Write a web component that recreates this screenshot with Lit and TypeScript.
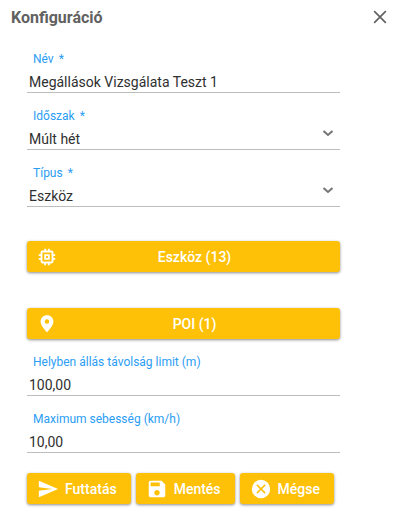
import { LitElement, html, css, svg } from "lit";
import { customElement, property, state } from "lit/decorators.js";

const icons = {
  close: svg`<path d="M5 5 19 19M19 5 5 19" fill="none" stroke="currentColor" stroke-width="2"/>`,
  chevron: svg`<path d="M3 8l9 8 9-8" fill="none" stroke="currentColor" stroke-width="4"/>`,
  memory: svg`<path d="M15 9H9v6h6V9zm-2 4h-2v-2h2v2zm8-2V9h-2V7c0-1.100-.9-2-2-2h-2V3h-2v2h-2V3H9v2H7c-1.100 0-2 .9-2 2v2H3v2h2v2H3v2h2v2c0 1.100.9 2 2 2h2v2h2v-2h2v2h2v-2h2c1.100 0 2-.9 2-2v-2h2v-2h-2v-2h2zm-4 6H7V7h10v10z"/>`,
  place: svg`<path d="M12 2.500C8.100 2.500 5 5.500 5 9.300c0 5.100 7 11.700 7 11.700s7-6.600 7-11.700c0-3.800-3.100-6.800-7-6.800zm0 9.200a2.500 2.500 0 1 1 0-5 2.500 2.500 0 0 1 0 5z"/>`,
  send: svg`<path d="M2.010 21 23 12 2.010 3 2 10l15 2-15 2z"/>`,
  save: svg`<path d="M17 3H5a2 2 0 0 0-2 2v14c0 1.100.9 2 2 2h14c1.100 0 2-.9 2-2V7l-4-4zm-5 16c-1.660 0-3-1.340-3-3s1.340-3 3-3 3 1.340 3 3-1.340 3-3 3zm3-10H5V5h10v4z"/>`,
  cancel: svg`<circle cx="12" cy="12" r="10"/><path d="M7.500 7.500l9 9M16.500 7.500l-9 9" stroke="#ffc107" stroke-width="1.600"/>`,
};

type IconName = keyof typeof icons;

const icon = (name: IconName) =>
  html`<svg class="icon ${name}" viewBox="0 0 24 24" aria-hidden="true">${icons[name]}</svg>`;

@customElement("form-field")
export class FormField extends LitElement {
  @property() label = "";
  @property() value = "";
  @property({ type: Boolean }) required = false;
  @property({ type: Array }) options: string[] = [];

  static styles = css`
    :host {
      display: block;
    }
    .label {
      display: block;
      padding-left: 6px;
      font-size: 12px;
      line-height: 16px;
      color: #2a9df4;
    }
    .star {
      padding-left: 5px;
    }
    .box {
      display: flex;
      align-items: center;
      border-bottom: 1px solid #bdbdbd;
      color: #757575;
    }
    .control {
      flex: 1;
      min-width: 0;
      box-sizing: border-box;
      height: 25px;
      margin: 0;
      padding: 5px 2px 0;
      border: 0;
      outline: 0;
      appearance: none;
      background: transparent;
      color: #303030;
      font: 14px/20px Roboto, sans-serif;
    }
    .chevron {
      width: 12px;
      height: 12px;
      margin: 0 6px 8px -18px;
      pointer-events: none;
    }
  `;

  render() {
    return html`
      <label class="label" for="control"
        >${this.label}${this.required ? html`<span class="star">*</span>` : null}</label
      >
      <div class="box">
        ${this.options.length
          ? html`<select class="control" id="control" ?required=${this.required}>
                ${this.options.map((o) => html`<option ?selected=${o === this.value}>${o}</option>`)}
              </select>
              ${icon("chevron")}`
          : html`<input
              class="control"
              id="control"
              type="text"
              .value=${this.value}
              ?required=${this.required}
            />`}
      </div>
    `;
  }
}

@customElement("app-root")
export class AppRoot extends LitElement {
  @state() private devices = 13;
  @state() private pois = 1;

  static styles = css`
    :host {
      display: block;
      min-height: 100vh;
      background: #fff;
      font-family: Roboto, sans-serif;
    }
    .header {
      display: flex;
      align-items: flex-start;
      justify-content: space-between;
      padding: 7px 10px 0 11px;
    }
    .title {
      margin: 0;
      font-size: 16px;
      line-height: 22px;
      font-weight: 700;
      color: #616161;
    }
    .dismiss {
      display: flex;
      padding: 0;
      border: 0;
      background: none;
      color: #616161;
      cursor: pointer;
    }
    .form {
      padding: 22px 60px 6px 27px;
    }
    .group {
      display: grid;
      gap: 15px;
    }
    .pickers {
      display: grid;
      gap: 36px;
      padding: 34px 0 15px;
    }
    .actions {
      display: flex;
      gap: 5px;
      padding-top: 20px;
    }
    .button {
      display: flex;
      align-items: center;
      gap: 6px;
      height: 31px;
      padding: 0 14px 0 10px;
      border: 0;
      border-radius: 3px;
      background: #ffc107;
      box-shadow: 0 1px 3px rgba(0, 0, 0, 0.45);
      color: #fff;
      font: 500 14px/20px Roboto, sans-serif;
      cursor: pointer;
    }
    .wide {
      width: 100%;
      padding: 0 9px;
    }
    .wide .text {
      flex: 1;
      padding-right: 6px;
    }
    .icon {
      width: 22px;
      height: 22px;
      flex: none;
      fill: currentColor;
    }
    .close {
      width: 20px;
      height: 20px;
    }
  `;

  render() {
    return html`
      <header class="header">
        <h1 class="title">Konfiguráció</h1>
        <button class="dismiss" type="button" aria-label="Bezárás">${icon("close")}</button>
      </header>
      <form class="form">
        <div class="group">
          <form-field label="Név" value="Megállások Vizsgálata Teszt 1" required></form-field>
          <form-field label="Időszak" value="Múlt hét" .options=${["Múlt hét"]} required></form-field>
          <form-field label="Típus" value="Eszköz" .options=${["Eszköz"]} required></form-field>
        </div>
        <div class="pickers">
          <button class="button wide" type="button">
            ${icon("memory")}<span class="text">Eszköz (${this.devices})</span>
          </button>
          <button class="button wide" type="button">
            ${icon("place")}<span class="text">POI (${this.pois})</span>
          </button>
        </div>
        <div class="group">
          <form-field label="Helyben állás távolság limit (m)" value="100,00"></form-field>
          <form-field label="Maximum sebesség (km/h)" value="10,00"></form-field>
        </div>
        <div class="actions">
          <button class="button" type="button">${icon("send")}<span>Futtatás</span></button>
          <button class="button" type="button">${icon("save")}<span>Mentés</span></button>
          <button class="button" type="button">${icon("cancel")}<span>Mégse</span></button>
        </div>
      </form>
    `;
  }
}
